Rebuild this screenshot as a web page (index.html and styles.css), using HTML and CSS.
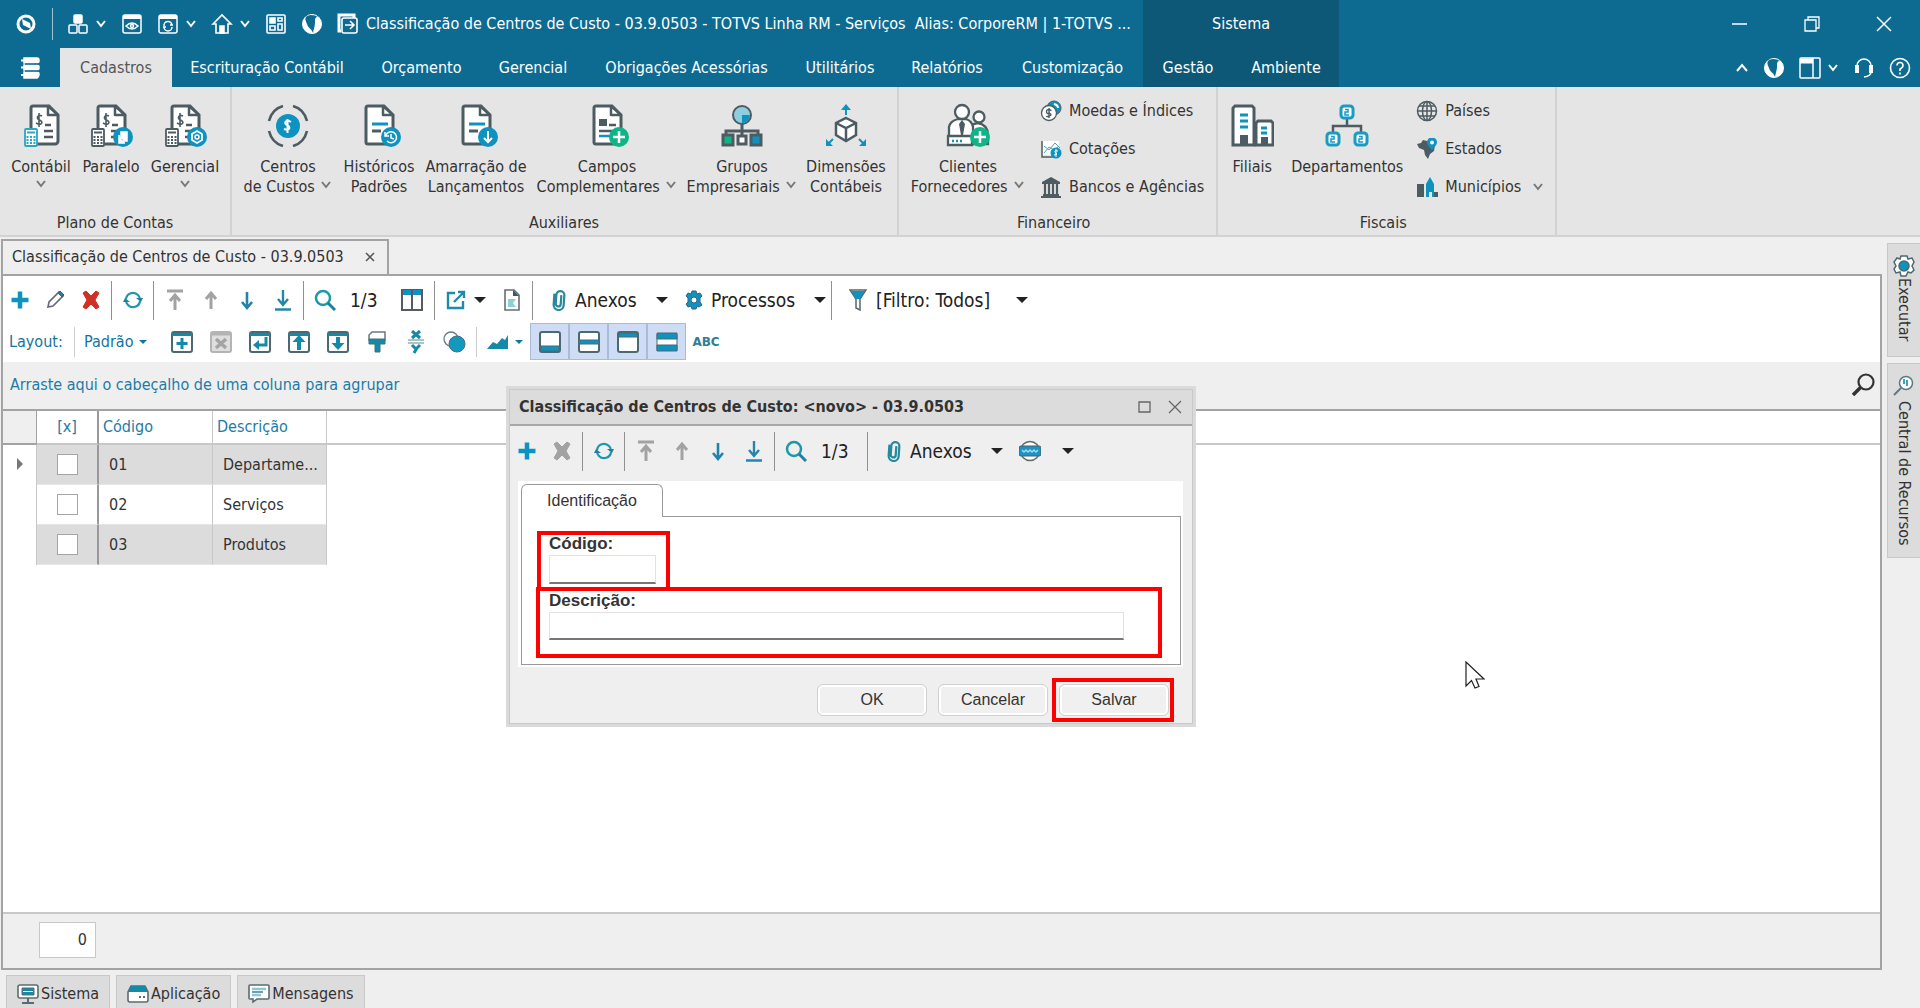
FILE: index.html
```html
<!DOCTYPE html>
<html lang="pt-BR">
<head>
<meta charset="utf-8">
<title>Classificação de Centros de Custo - TOTVS Linha RM</title>
<link rel="stylesheet" href="styles.css">
</head>
<body>
<svg class="defs" aria-hidden="true">
  <symbol id="chev" viewBox="0 0 12 10"><path d="M2 2l4 5 4-5" fill="none" stroke="currentColor" stroke-width="2"/></symbol>
  <symbol id="caret" viewBox="0 0 12 8"><path d="M0 1h12L6 7z" fill="currentColor"/></symbol>
  <symbol id="globe" viewBox="0 0 22 22"><circle cx="11" cy="11" r="9.500" fill="#fff" stroke="#fff"/><path d="M6 3c4-2 8-1 11 1-3 0-3 2-3 5 0 4-1 6-2 11-2-5-5-5-6-9C5 8 3 6 6 3z" fill="#0d6b92"/></symbol>
  <symbol id="doc" viewBox="0 0 44 44"><path d="M11 3h16l9 9v26a3 3 0 0 1-3 3H11a2 2 0 0 1-2-2V5a2 2 0 0 1 2-2z" fill="#fff" stroke="#4c5c62" stroke-width="3"/><path d="M26 3v9h10z" fill="#fff" stroke="#4c5c62" stroke-width="2.500" stroke-linejoin="round"/></symbol>
  <symbol id="money" viewBox="0 0 44 44"><use href="#doc"/><path d="M20 13c-4-2-6 2-3 4 4 1 4 5-1 4l-2-1M17 10v14" fill="none" stroke="#4c5c62" stroke-width="1.600"/><path d="M23 22h6M22 28h9M22 34h9" stroke="#4c5c62" stroke-width="2.500"/></symbol>
  <symbol id="calc" viewBox="0 0 14 19"><rect x="1" y="1" width="12" height="17" rx="1" fill="#fff" stroke="currentColor" stroke-width="1.800"/><path d="M3 4.500h8" stroke="currentColor" stroke-width="2"/><path d="M3.500 8v9M7 8v9M10.500 8v9" stroke="currentColor" stroke-width="2" stroke-dasharray="2 1"/></symbol>
  <symbol id="plus" viewBox="0 0 20 20"><path d="M10 1.500v17M1.500 10h17" stroke="#0e93c1" stroke-width="4.500"/></symbol>
  <symbol id="cross" viewBox="0 0 20 20"><path d="M2 3l3-2 5 5 5-5 3 2-4 7 4 7-3 2-5-5-5 5-3-2 4-7z" fill="currentColor" stroke="currentColor" stroke-linejoin="round"/></symbol>
  <symbol id="refresh" viewBox="0 0 22 20"><path d="M4 9a7 7 0 0 1 12-4l2 3M18 11a7 7 0 0 1-12 4l-2-3" fill="none" stroke="#1f97ab" stroke-width="2.200"/><path d="M14 8h7l-2 4zM8 12H1l2-4z" fill="#1f7fa6"/></symbol>
  <symbol id="first" viewBox="0 0 20 22"><path d="M2 2h16M10 21V7M5 12l5-6 5 6" fill="none" stroke="#a2a2a2" stroke-width="3"/></symbol>
  <symbol id="up" viewBox="0 0 20 22"><path d="M10 20V4M5 10l5-6 5 6" fill="none" stroke="#a2a2a2" stroke-width="3"/></symbol>
  <symbol id="down" viewBox="0 0 20 22"><path d="M10 3v15M5 13l5 6 5-6" fill="none" stroke="#2480ad" stroke-width="2.600"/></symbol>
  <symbol id="last" viewBox="0 0 20 22"><path d="M10 1v14M5 10l5 6 5-6M2 20.500h16" fill="none" stroke="#2486a8" stroke-width="2.400"/></symbol>
  <symbol id="search" viewBox="0 0 22 22"><circle cx="9" cy="9" r="7" fill="none" stroke="#1f97ab" stroke-width="2.500"/><path d="M14 14l7 7" stroke="#1f7fa6" stroke-width="3"/></symbol>
  <symbol id="clip" viewBox="0 0 16 22"><path d="M10 6v9a2.500 2.500 0 0 1-5 0V6a4 4 0 0 1 8 0v10a5 5 0 0 1-10 0V5" transform="rotate(4 8 11)" fill="none" stroke="#27899b" stroke-width="2.200"/></symbol>
  <symbol id="win" viewBox="0 0 22 22"><rect x="1" y="1" width="20" height="20" rx="2" fill="#fff" stroke="#4c6870" stroke-width="2"/><path d="M1 2h20v3H1z" fill="#1489a8"/></symbol>
</svg>

<div class="app">
  <header class="top">
    <div class="titlebar">
      <div class="quick">
        <button class="q q-logo" aria-label="Aplicação"><svg width="22" height="22"><circle cx="11" cy="11" r="8" fill="none" stroke="#fff" stroke-width="3"/><path d="M7 6l8 4 1 6-8-4z" fill="#fff"/></svg></button>
        <button class="q q-wide" aria-label="Módulos"><svg width="22" height="22" fill="none" stroke="#fff" stroke-width="1.500"><rect x="7" y="2" width="8" height="8" rx="1" fill="#fff"/><rect x="2" y="12" width="8" height="8" rx="1"/><rect x="12" y="12" width="8" height="8" rx="1"/></svg><svg class="chev"><use href="#chev"/></svg></button>
        <button class="q q-mid" aria-label="Visualizar"><svg width="22" height="22" fill="none" stroke="#fff" stroke-width="1.500"><rect x="2" y="2" width="18" height="18" rx="2"/><path d="M2 4h18" stroke-width="4"/><path d="M5 13q6-6 12 0q-6 6-12 0z"/><circle cx="11" cy="13" r="1.500"/></svg></button>
        <button class="q q-wide" aria-label="Atualizar janela"><svg width="22" height="22" fill="none" stroke="#fff" stroke-width="1.500"><rect x="2" y="2" width="18" height="18" rx="2"/><path d="M2 4h18" stroke-width="4"/><path d="M7 13a4 4 0 0 1 8-1M15 14a4 4 0 0 1-8 0M13 12h3M6 14h3"/></svg><svg class="chev"><use href="#chev"/></svg></button>
        <button class="q q-wide" aria-label="Início"><svg width="22" height="22" fill="none" stroke="#fff" stroke-width="1.600"><path d="M2 11l9-9 9 9h-3v9H5v-9z"/><path d="M9 13h4v7H9z" fill="#fff"/></svg><svg class="chev"><use href="#chev"/></svg></button>
        <button class="q q-mid" aria-label="Painel"><svg width="22" height="22" fill="none" stroke="#fff" stroke-width="1.600"><rect x="2" y="2" width="18" height="18" rx="1"/><path d="M5 5h5v5H5z" fill="#fff"/><path d="M13 5h4v3h-4zM13 11h4v6h-4zM5 13h5v4H5z"/></svg></button>
        <button class="q q-mid" aria-label="Portal"><svg width="22" height="22"><use href="#globe"/></svg></button>
        <button class="q q-mid" aria-label="Sair"><svg width="22" height="22" fill="none" stroke="#fff" stroke-width="1.600"><path d="M4 18H2V2h15v3" stroke-width="3"/><rect x="5" y="5" width="15" height="15" rx="2"/><path d="M8 12h8M13 8l4 4-4 4"/></svg></button>
        <span class="caption">Classificação de Centros de Custo - 03.9.0503 - TOTVS Linha RM - Serviços&nbsp; Alias: CorporeRM | 1-TOTVS ...</span>
      </div>
      <div class="context">Sistema</div>
      <div class="winbtns">
        <button aria-label="Minimizar"><svg width="16" height="16"><path d="M0 8h15" stroke="#fff" stroke-width="1.500"/></svg></button>
        <button aria-label="Restaurar"><svg width="16" height="16" fill="none" stroke="#fff" stroke-width="1.300"><path d="M1 4h11v11H1zM4 4V1h11v11h-3"/></svg></button>
        <button aria-label="Fechar"><svg width="16" height="16"><path d="M1 1l14 14M15 1L1 15" stroke="#fff" stroke-width="1.500"/></svg></button>
      </div>
    </div>
    <nav class="tabs">
      <button class="dbicon" aria-label="Menu"><svg width="20" height="22" fill="none" stroke="#fff" stroke-width="1.500"><path d="M4 1h13q2 0 2 2.500T17 6H4zM4 8h13q2 0 2 2.500T17 13H4zM4 15h13q2 0 2 2.500T17 21H4z" fill="#fff"/><path d="M1 3.500h6M1 10.500h6M1 18h6" stroke-width="2"/><path d="M5 7h14M5 14h14" stroke="#0d6b92"/></svg></button>
      <a href="#" class="active">Cadastros</a><a href="#">Escrituração Contábil</a><a href="#">Orçamento</a><a href="#">Gerencial</a><a href="#">Obrigações Acessórias</a><a href="#">Utilitários</a><a href="#">Relatórios</a><a href="#">Customização</a><a href="#" class="ctx">Gestão</a><a href="#" class="ctx">Ambiente</a>
      <div class="tools">
        <button aria-label="Recolher"><svg width="14" height="10"><path d="M2 8l5-6 5 6" fill="none" stroke="#fff" stroke-width="2"/></svg></button>
        <button aria-label="Portal"><svg width="22" height="22"><use href="#globe"/></svg></button>
        <button aria-label="Layout da janela"><svg width="22" height="22" fill="none" stroke="#fff" stroke-width="1.500"><rect x="1" y="1" width="20" height="20" rx="1"/><path d="M1 4h13" stroke-width="5"/><path d="M14 1v20"/></svg><svg class="chev"><use href="#chev"/></svg></button>
        <button aria-label="Suporte"><svg width="22" height="22" fill="none" stroke="#fff"><path d="M4 12V9a7 7 0 0 1 14 0v3M18 15q0 4-7 5" stroke-width="1.500"/><path d="M4 8v8M18 8v8" stroke-width="4"/></svg></button>
        <button aria-label="Ajuda"><svg width="22" height="22" fill="none" stroke="#fff" stroke-width="1.600"><circle cx="11" cy="11" r="9.500"/><path d="M8 8.500q0-3 3-3t3 3q0 2-3 3.500v2M11 15.500v2"/></svg></button>
      </div>
    </nav>
  </header>

  <section class="ribbon">
    <div class="group">
      <div class="items">
        <button class="big w72"><svg class="ico" viewBox="0 0 44 44"><use href="#money" x="3"/><g color="#2aa5c6"><use href="#calc" x="5" y="25" width="14" height="19"/></g></svg><span>Contábil</span><svg class="chev"><use href="#chev"/></svg></button>
        <button class="big w68"><svg class="ico" viewBox="0 0 44 44"><use href="#money"/><g color="#4c5c62"><use href="#calc" x="2" y="25" width="14" height="19"/></g><circle cx="34" cy="34" r="10" fill="#0e93c1"/><path d="M30 32v8h6M32 29h6v9h-6z" fill="#fff" stroke="#fff" stroke-width="1.500"/></svg><span>Paralelo</span></button>
        <button class="big w80"><svg class="ico" viewBox="0 0 44 44"><use href="#money"/><g color="#4c5c62"><use href="#calc" x="2" y="25" width="14" height="19"/></g><circle cx="34" cy="34" r="10" fill="#0e93c1"/><path d="M34 28l5 3v6l-5 3-5-3v-6z" fill="none" stroke="#fff" stroke-width="1.800"/><circle cx="34" cy="34" r="2" fill="none" stroke="#fff" stroke-width="1.500"/></svg><span>Gerencial</span><svg class="chev"><use href="#chev"/></svg></button>
      </div>
      <h2>Plano de Contas</h2>
    </div>
    <div class="group g2">
      <div class="items">
        <button class="big w100"><svg class="ico" viewBox="0 0 44 44"><circle cx="22" cy="23" r="12" fill="#0e93c1"/><path d="M25 19c-5-3-8 1-4 3s3 6-3 4M21.500 16v14" fill="none" stroke="#fff" stroke-width="2"/><path d="M17 3Q6 6 3 18M27 3q11 3 14 15M17 43Q6 40 3 28M27 43q11-3 14-15" fill="none" stroke="#4c5c62" stroke-width="2.600"/></svg><span>Centros<br>de Custos <svg class="chev"><use href="#chev"/></svg></span></button>
        <button class="big w82"><svg class="ico" viewBox="0 0 44 44"><use href="#doc"/><path d="M15 21h16" stroke="#0e93c1" stroke-width="3"/><path d="M15 28h9" stroke="#4c5c62" stroke-width="3"/><circle cx="34" cy="34" r="10" fill="#0e93c1"/><path d="M29 32a5.500 5.500 0 1 1 1 6M28 29v4h4M34 31v4l3 1" fill="none" stroke="#fff" stroke-width="1.500"/></svg><span>Históricos<br>Padrões</span></button>
        <button class="big w112"><svg class="ico" viewBox="0 0 44 44"><use href="#doc"/><path d="M15 21h16" stroke="#0e93c1" stroke-width="3"/><path d="M15 28h9" stroke="#4c5c62" stroke-width="3"/><circle cx="34" cy="34" r="10" fill="#0e93c1"/><path d="M34 28v11M30 35l4 4 4-4" fill="none" stroke="#fff" stroke-width="2"/></svg><span>Amarração de<br>Lançamentos</span></button>
        <button class="big w150"><svg class="ico" viewBox="0 0 44 44"><use href="#doc"/><path d="M14 16h8v7h-8z" fill="#4c5c62"/><path d="M24 22h7M14 28h16" stroke="#4c5c62" stroke-width="2.500"/><path d="M14 33h12" stroke="#0e93c1" stroke-width="2.500"/><circle cx="34" cy="34" r="10" fill="#0fb587"/><path d="M34 28v12M28 34h12" stroke="#fff" stroke-width="2.500"/></svg><span>Campos<br>Complementares <svg class="chev"><use href="#chev"/></svg></span></button>
        <button class="big w120"><svg class="ico" viewBox="0 0 44 44"><circle cx="22" cy="12" r="9" fill="#8fcde0" stroke="#4c5c62" stroke-width="2"/><path d="M22 12h8a8 8 0 0 1-8 8z" fill="#0e93c1"/><path d="M22 21v12M6 33v-5h32v5" fill="none" stroke="#4c5c62" stroke-width="3"/><g stroke="#4c5c62" stroke-width="3"><path d="M3 32h10v10H3z" fill="#0fb587"/><path d="M18 33h8v8h-8z" fill="#fff"/><path d="M31 32h10v10H31z" fill="#0e93c1"/></g></svg><span>Grupos<br>Empresariais <svg class="chev"><use href="#chev"/></svg></span></button>
        <button class="big w88"><svg class="ico" viewBox="0 0 44 44"><path d="M22 15l10 5v12l-10 6-10-6V20z" fill="#fff" stroke="#4c5c62" stroke-width="2.500"/><path d="M12 20l10 5 10-5M22 25v12" fill="none" stroke="#4c5c62" stroke-width="2.500"/><path d="M22 12V5M9 36l-5 5M35 36l5 5" stroke="#0e93c1" stroke-width="2"/><path d="M17 7h10l-5-6zM2 36v7h7zM42 36v7h-7z" fill="#0e93c1"/></svg><span>Dimensões<br>Contábeis</span></button>
      </div>
      <h2>Auxiliares</h2>
    </div>
    <div class="group g3">
      <div class="items">
        <button class="big w130"><svg class="ico" viewBox="0 0 44 44"><g fill="#fff" stroke="#4c5c62" stroke-width="2.300"><path d="M22 41V27q2-6 10-7 10 2 10 12v9z"/><circle cx="33" cy="14" r="5.500"/><path d="M3 35V24q1-6 9-8h8q6 2 7 8v11z"/><circle cx="16" cy="9" r="7"/><path d="M2 33h24v9H2z"/></g><path d="M16 17l3 4-2 11h-2l-2-11z" fill="#4c5c62"/><path d="M6 38h12" stroke="#0e93c1" stroke-width="2.500" stroke-dasharray="2 2"/><circle cx="34" cy="34" r="10" fill="#0fb587"/><path d="M34 28v12M28 34h12" stroke="#fff" stroke-width="2.500"/></svg><span>Clientes<br>Fornecedores <svg class="chev"><use href="#chev"/></svg></span></button>
        <div class="smalls">
          <button class="small"><svg width="22" height="22" viewBox="0 0 22 22"><circle cx="14" cy="8" r="7" fill="#0e93c1" stroke="#4c5c62"/><path d="M14 4q4 1 4 4" stroke="#fff" fill="none" stroke-width="2"/><circle cx="9" cy="13" r="7.500" fill="#fff" stroke="#4c5c62" stroke-width="1.300"/><path d="M11.500 10.500q-5-2-5 1t3 1.500q3 2 0 3t-3 0M9 8v10" fill="none" stroke="#4c5c62" stroke-width="1.400"/></svg>Moedas e Índices</button>
          <button class="small"><svg width="22" height="22" viewBox="0 0 22 22"><path d="M2 3h17v14H2z" fill="#fff"/><path d="M2 3v16h12" fill="none" stroke="#4c5c62" stroke-width="1.500"/><path d="M4 8l5 4 6-7 5 5M4 15l5-6 5 3 5-4" fill="none" stroke="#4da5bf"/><circle cx="16" cy="15" r="5.500" fill="#0e93c1"/><path d="M18 13q-4-1-3 1t2 2-3 1M16 11v8" fill="none" stroke="#fff"/></svg>Cotações</button>
          <button class="small"><svg width="22" height="22" viewBox="0 0 22 22" fill="#4c5c62"><path d="M11 1l9 5v2H2V6z"/><path d="M3 18h16v2H3zM1 20h20v2H1z"/><path d="M5 8v10M9 8v10M13 8v10M17 8v10" stroke="#4c5c62" stroke-width="2.200"/></svg>Bancos e Agências</button>
        </div>
      </div>
      <h2>Financeiro</h2>
    </div>
    <div class="group g4">
      <div class="items">
        <button class="big w60"><svg class="ico" viewBox="0 0 44 44"><path d="M3 42V5l2-2h17l2 2v37z" fill="#fff" stroke="#4c5c62" stroke-width="3"/><path d="M26 42V20l2-2h13l2 2v22z" fill="#fff" stroke="#4c5c62" stroke-width="3"/><path d="M10 12h8M10 18h8M10 24h8M31 25h6M31 30h6" stroke="#0e93c1" stroke-width="3"/><path d="M10 42V32h8v10zM31 42v-8h7v8z" fill="#4c5c62"/></svg><span>Filiais</span></button>
        <button class="big w130"><svg class="ico" viewBox="0 0 44 44"><path d="M22 14v8M8 30v-7h28v7" fill="none" stroke="#4c5c62" stroke-width="2.500"/><g fill="#fff" stroke="#1a9bc2" stroke-width="3"><rect x="16" y="3" width="12" height="12" rx="3"/><rect x="2" y="30" width="12" height="12" rx="3"/><rect x="30" y="30" width="12" height="12" rx="3"/></g><g fill="none" stroke="#1a9bc2" stroke-width="1.500"><path d="M20 6.500h3v2.500h-3v3h4M6 33.500h3v2.500H6v3h4M34 33.500h3v2.500h-3v3h4"/></g></svg><span>Departamentos</span></button>
        <div class="smalls s4">
          <button class="small"><svg width="22" height="22" viewBox="0 0 22 22" fill="none" stroke="#4c5c62" stroke-width="1.500"><circle cx="11" cy="11" r="9.500"/><ellipse cx="11" cy="11" rx="4.500" ry="9.500"/><path d="M11 1v20M1 11h20M3 6h16M3 16h16"/></svg>Países</button>
          <button class="small"><svg width="22" height="22" viewBox="0 0 22 22"><path d="M1 6l4-1 2-3 4 1 8 4-1 6-4 3-2 5-3-4-1-5-5-2z" fill="#4c5c62"/><path d="M16 12q-5-5-5-8a5 4.500 0 0 1 10 0q0 3-5 8z" fill="#0e93c1"/><circle cx="16" cy="4.500" r="2" fill="#fff"/></svg>Estados</button>
          <button class="small"><svg width="22" height="22" viewBox="0 0 22 22"><path d="M1 8h7v13H1zM17 16h5v5h-5z" fill="#4c5c62"/><path d="M10 21V8l4-7 4 7v13h-2v-5h-3v5z" fill="#0e93c1"/></svg>Municípios<svg class="chev push"><use href="#chev"/></svg></button>
        </div>
      </div>
      <h2>Fiscais</h2>
    </div>
  </section>

  <div class="body">
    <div class="left">
      <div class="doctab"><span>Classificação de Centros de Custo - 03.9.0503</span><button aria-label="Fechar aba"><svg width="12" height="12"><path d="M2 2l8 8M10 2l-8 8" stroke="#555" stroke-width="1.500"/></svg></button></div>
      <main class="panel">
        <div class="tb tb1">
          <button class="b" aria-label="Novo"><svg width="20" height="20"><use href="#plus"/></svg></button>
          <button class="b" aria-label="Editar"><svg width="20" height="20"><path d="M3 17l1-5L14 2l4 4L8 16z" fill="#fff" stroke="#667" stroke-width="1.600"/><path d="M13 3l2-2 4 4-2 2z" fill="#1f7fa6" stroke="#556"/></svg></button>
          <button class="b red" aria-label="Excluir"><svg width="20" height="20"><use href="#cross"/></svg></button>
          <i class="sep"></i>
          <button class="b" aria-label="Atualizar"><svg width="22" height="20"><use href="#refresh"/></svg></button>
          <i class="sep"></i>
          <button class="b" aria-label="Primeiro"><svg width="20" height="22"><use href="#first"/></svg></button>
          <button class="b" aria-label="Anterior"><svg width="20" height="22"><use href="#up"/></svg></button>
          <button class="b" aria-label="Próximo"><svg width="20" height="22"><use href="#down"/></svg></button>
          <button class="b" aria-label="Último"><svg width="20" height="22"><use href="#last"/></svg></button>
          <i class="sep"></i>
          <button class="b" aria-label="Pesquisar"><svg width="22" height="22"><use href="#search"/></svg></button>
          <span class="count">1/3</span>
          <button class="b cols" aria-label="Colunas"><svg width="22" height="22"><path d="M1 1h20v20H1zM11 1v20" fill="#fff" stroke="#555b60" stroke-width="2"/><path d="M2 1h8v5H2zM12 1h8v5h-8z" fill="#0e93c1"/></svg></button>
          <i class="sep"></i>
          <button class="b ext" aria-label="Exportar"><svg width="20" height="20" fill="none" stroke="#1f8ba6" stroke-width="2.400"><path d="M9 3H2v15h15v-7M8 12l9-9M12 2h6v6"/></svg><svg class="caret"><use href="#caret"/></svg></button>
          <button class="b" aria-label="Relatório"><svg width="16" height="22"><path d="M1 1h9l5 5v15H1z" fill="#fff" stroke="#666e73" stroke-width="1.600"/><path d="M9 1v6h6z" fill="#345b72"/><path d="M4 10h8l-3 4 3 4H4z" fill="#8fd0d4"/></svg></button>
          <i class="sep"></i>
          <button class="b txt anexos"><svg width="16" height="22"><use href="#clip"/></svg>Anexos<svg class="caret"><use href="#caret"/></svg></button>
          <button class="b txt procs"><svg width="20" height="20"><g stroke="#37647a" stroke-width="1"><path d="M8 1h4l1 3 3-1 2 3-2 2v4l2 3-3 2-2-1-1 3H8l-1-3-3 1-2-3 2-2V8L2 6l2-3 3 1z" fill="#0e93c1"/><circle cx="10" cy="10" r="3" fill="#fff"/></g></svg>Processos<svg class="caret"><use href="#caret"/></svg></button>
          <i class="sep"></i>
          <button class="b txt filter"><svg width="18" height="22"><path d="M1 1h16l-6 9v11l-4-2v-9z" fill="#fff" stroke="#58666c" stroke-width="1.500"/><path d="M2 2h14l-5 8H7z" fill="#0e93c1"/></svg>[Filtro: Todos]<svg class="caret"><use href="#caret"/></svg></button>
        </div>
        <div class="tb tb2">
          <span class="lay">Layout:</span><i class="sep light"></i>
          <button class="padrao">Padrão<svg class="caret sm"><use href="#caret"/></svg></button>
          <button class="l" aria-label="Novo layout"><svg width="22" height="22"><use href="#win"/><path d="M11 7v11M5.500 12.500h11" stroke="#1489a8" stroke-width="3"/></svg></button>
          <button class="l" aria-label="Excluir layout"><svg width="22" height="22"><rect x="1" y="1" width="20" height="20" rx="2" fill="#dedede" stroke="#b4b4b4" stroke-width="2"/><path d="M1 3h20" stroke="#b4b4b4" stroke-width="3"/><path d="M6 8l10 9M16 8L6 17" stroke="#a4a4a4" stroke-width="3.500"/></svg></button>
          <button class="l" aria-label="Restaurar layout"><svg width="22" height="22"><use href="#win"/><path d="M17 6v8H9" fill="none" stroke="#1489a8" stroke-width="3"/><path d="M4 14l6-5v10z" fill="#1489a8"/></svg></button>
          <button class="l" aria-label="Exportar layout"><svg width="22" height="22"><use href="#win"/><path d="M11 19v-9" stroke="#1489a8" stroke-width="4"/><path d="M4.500 11L11 4l6.500 7z" fill="#1489a8"/></svg></button>
          <button class="l" aria-label="Importar layout"><svg width="22" height="22"><use href="#win"/><path d="M11 6v8" stroke="#1489a8" stroke-width="4"/><path d="M4.500 12L11 19l6.500-7z" fill="#1489a8"/></svg></button>
          <button class="l" aria-label="Filtro visual"><svg width="20" height="24"><path d="M5 2h13v8H2V5z" fill="#fff" stroke="#6a7a80" stroke-width="1.500"/><path d="M2 9h16v5h-5v8H8v-8H2z" fill="#1489a8" stroke="#47707c"/></svg></button>
          <button class="l" aria-label="Formato"><svg width="18" height="24" fill="none" stroke="#1489a8" stroke-width="3"><path d="M5 1l8 7M13 1L5 8M5 15l4 4 4-4M10 18l-3 5"/><path d="M1 10h16M1 13h16" stroke="#5c8a96" stroke-width="1.200"/></svg></button>
          <button class="l" aria-label="Formas"><svg width="24" height="22"><circle cx="8" cy="8" r="7" fill="#fff" stroke="#6a7a80" stroke-width="1.300"/><circle cx="14" cy="13" r="8" fill="#1399bd" stroke="#47707c"/></svg></button>
          <i class="sep light"></i>
          <button class="l chart" aria-label="Gráfico"><svg width="22" height="18"><path d="M0 16l6-7 4 2 5-6 3 2 3-5v14z" fill="#1489a8"/></svg><svg class="caret sm"><use href="#caret"/></svg></button>
          <button class="t" aria-label="Rodapé" aria-pressed="true"><svg width="22" height="22"><rect x="1" y="1" width="20" height="20" rx="2" fill="#fff" stroke="#4c6870" stroke-width="2"/><path d="M2 15h18v5H2z" fill="#0e93c1" stroke="#4c6870"/></svg></button>
          <button class="t" aria-label="Linhas" aria-pressed="true"><svg width="22" height="22"><rect x="1" y="1" width="20" height="20" rx="2" fill="#fff" stroke="#4c6870" stroke-width="2"/><path d="M1 9h20v4H1z" fill="#0e93c1" stroke="#4c6870"/></svg></button>
          <button class="t" aria-label="Cabeçalho" aria-pressed="true"><svg width="22" height="22"><rect x="1" y="1" width="20" height="20" rx="2" fill="#fff" stroke="#4c6870" stroke-width="2"/><path d="M2 2h18v4H2z" fill="#0e93c1" stroke="#4c6870"/></svg></button>
          <button class="t" aria-label="Faixas" aria-pressed="true"><svg width="22" height="22"><rect x="1" y="4" width="20" height="15" fill="#fff" stroke="#4c6870"/><path d="M1 2h20v6H1zM1 14h20v6H1z" fill="#0e93c1" stroke="#4c6870"/></svg></button>
          <button class="abc">ABC</button>
        </div>
        <div class="groupby"><span>Arraste aqui o cabeçalho de uma coluna para agrupar</span><button aria-label="Localizar"><svg width="24" height="24"><circle cx="14" cy="9" r="7.500" fill="none" stroke="#333" stroke-width="2.200"/><path d="M9 14l-8 8" stroke="#333" stroke-width="3.500"/></svg></button></div>
        <div class="gridwrap">
          <table>
            <colgroup><col class="c0"><col class="c1"><col class="c2"><col class="c2"><col></colgroup>
            <thead><tr><th class="ind"></th><th class="chk">[x]</th><th>Código</th><th>Descrição</th><th class="fill"></th></tr></thead>
            <tbody>
              <tr><td class="ind"><svg width="8" height="12"><path d="M1 0l6 6-6 6z" fill="#777"/></svg></td><td class="chk"><input type="checkbox" aria-label="Selecionar 01"></td><td>01</td><td>Departame...</td><td class="fill"></td></tr>
              <tr><td class="ind"></td><td class="chk"><input type="checkbox" aria-label="Selecionar 02"></td><td>02</td><td>Serviços</td><td class="fill"></td></tr>
              <tr><td class="ind"></td><td class="chk"><input type="checkbox" aria-label="Selecionar 03"></td><td>03</td><td>Produtos</td><td class="fill"></td></tr>
            </tbody>
          </table>
        </div>
        <div class="foot"><output>0</output></div>
      </main>
      <div class="bottom">
        <button><svg width="22" height="20"><rect x="1" y="1" width="20" height="13" rx="2" fill="#fff" stroke="#5a6c72" stroke-width="1.600"/><path d="M5 4h12v7H5z" fill="#1489a8" stroke="#5a6c72"/><path d="M6 7.500h10" stroke="#fff"/><path d="M11 14v4M5 19h12" stroke="#5a6c72" stroke-width="2"/></svg>Sistema</button>
        <button><svg width="22" height="20"><path d="M4 2h14l3 6v8q0 2-2 2H3q-2 0-2-2V8z" fill="#fff" stroke="#5a6c72" stroke-width="1.600"/><path d="M4 2h14l3 6H1z" fill="#1489a8"/><path d="M12 13h2M16 13h2" stroke="#5a6c72" stroke-width="2"/></svg>Aplicação</button>
        <button><svg width="22" height="20"><path d="M2 1h18q1 0 1 1v12q0 1-1 1H9l-4 3v-3H2q-1 0-1-1V2q0-1 1-1z" fill="#fff" stroke="#5a6c72" stroke-width="1.600"/><path d="M4 5h14M4 11h9" stroke="#8ac7d8" stroke-width="2.500"/><path d="M4 8h11" stroke="#7a9aa4" stroke-width="2"/></svg>Mensagens</button>
      </div>
    </div>
    <aside class="side">
      <button><svg width="24" height="24"><path d="M9 2h6l1 3 4-1 2 4-2 4 2 4-3 3-3-1-2 4H9l-1-4-4 1-2-4 2-3-2-4 3-4 3 1z" fill="#fff" stroke="#4c6870" stroke-width="1.500"/><circle cx="12" cy="12" r="5" fill="#0e93c1" stroke="#4c6870" stroke-width="1.500"/></svg><span>Executar</span></button>
      <button><svg width="22" height="22"><circle cx="13" cy="8" r="6.500" fill="#fff" stroke="#5a7a84" stroke-width="1.500"/><path d="M8 13l-7 7" stroke="#5a7a84" stroke-width="2"/><path d="M11 4v5M14 5v6" stroke="#3fa3c0" stroke-width="2"/></svg><span>Central de Recursos</span></button>
    </aside>
  </div>

  <section class="dialog" role="dialog" aria-labelledby="dlgt">
    <div class="dtitle"><h1 id="dlgt">Classificação de Centros de Custo: &lt;novo&gt; - 03.9.0503</h1>
      <button aria-label="Maximizar"><svg width="14" height="14"><path d="M1 2h11v10H1z" fill="none" stroke="#666" stroke-width="1.300"/></svg></button>
      <button aria-label="Fechar"><svg width="14" height="14"><path d="M1 1l12 12M13 1L1 13" stroke="#666" stroke-width="1.300"/></svg></button>
    </div>
    <div class="tb dtb">
      <button class="b" aria-label="Novo"><svg width="20" height="20"><use href="#plus"/></svg></button>
      <button class="b grey" aria-label="Excluir"><svg width="20" height="20"><use href="#cross"/></svg></button>
      <i class="sep"></i>
      <button class="b" aria-label="Atualizar"><svg width="22" height="20"><use href="#refresh"/></svg></button>
      <i class="sep"></i>
      <button class="b" aria-label="Primeiro"><svg width="20" height="22"><use href="#first"/></svg></button>
      <button class="b" aria-label="Anterior"><svg width="20" height="22"><use href="#up"/></svg></button>
      <button class="b" aria-label="Próximo"><svg width="20" height="22"><use href="#down"/></svg></button>
      <button class="b" aria-label="Último"><svg width="20" height="22"><use href="#last"/></svg></button>
      <i class="sep"></i>
      <button class="b" aria-label="Pesquisar"><svg width="22" height="22"><use href="#search"/></svg></button>
      <span class="count">1/3</span>
      <i class="sep"></i>
      <button class="b txt anexos"><svg width="16" height="22"><use href="#clip"/></svg>Anexos<svg class="caret"><use href="#caret"/></svg></button>
      <button class="b www" aria-label="Web"><svg width="22" height="22"><circle cx="11" cy="11" r="9.500" fill="#fff" stroke="#666" stroke-width="1.500"/><rect x="0" y="6" width="22" height="10" rx="2" fill="#1c93c4" stroke="#47606c"/><path d="M3 10l2 2 2-2 2 2 2-2 2 2 2-2 2 2 2-2" fill="none" stroke="#9fd8ec" stroke-width="1.500"/></svg><svg class="caret"><use href="#caret"/></svg></button>
    </div>
    <div class="dbody">
      <button class="dtab">Identificação</button>
      <div class="form">
        <label for="cod">Código:</label><input id="cod" class="short" type="text">
        <label for="des">Descrição:</label><input id="des" class="long" type="text">
      </div>
    </div>
    <div class="dbtns"><button>OK</button><button>Cancelar</button><button>Salvar</button></div>
    <div class="mark m1"></div><div class="mark m2"></div><div class="mark m3"></div>
  </section>
  <svg class="cursor" width="20" height="30"><path d="M1 1v24l5.500-5.500L10 27l4-1.500-3-7.500h8z" fill="#fff" stroke="#222" stroke-width="1.200"/></svg>
</div>
</body>
</html>
```
FILE: styles.css
```css
* { box-sizing: border-box; }
body { margin: 0; background: #efefef; color: #333; font: 16px/20px "DejaVu Sans Condensed", "DejaVu Sans", sans-serif; }
button { background: none; border: 0; padding: 0; margin: 0; font: inherit; color: inherit; }
h1, h2 { margin: 0; font: inherit; }
svg { flex: none; }
.defs { position: absolute; width: 0; height: 0; }
.chev { width: 12px; height: 10px; }
.caret { width: 12px; height: 8px; color: #222; }
.caret.sm { width: 8px; height: 6px; color: #12759c; }
.app { min-height: 100vh; display: flex; flex-direction: column; position: relative; }

/* title bar and main tabs */
.top { background: #0d6b92; color: #fff; }
.titlebar { height: 48px; display: flex; }
.quick { width: 1143px; display: flex; align-items: center; padding-left: 8px; }
.q { display: flex; align-items: center; justify-content: center; gap: 6px; height: 32px; }
.q-logo { width: 45px; border-right: 1px solid #9fc3d3; padding-right: 8px; }
.q-wide { width: 54px; }
.q-mid { width: 36px; }
.q-logo + .q-wide { margin-left: 7px; }
.caption { white-space: nowrap; }
.context { width: 196px; background: #0e5877; display: flex; align-items: center; justify-content: center; }
.winbtns { margin-left: auto; display: flex; }
.winbtns button { width: 72px; display: flex; align-items: center; justify-content: center; }
.tabs { height: 39px; display: grid; grid-template-columns: 60px 112px 190px 119px 104px 203px 104px 110px 141px 90px 106px 1fr; }
.tabs a, .dbicon { color: #fff; text-decoration: none; display: flex; align-items: center; justify-content: center; white-space: nowrap; }
.tabs .active { background: #e5e5e5; color: #555; }
.tabs .ctx { background: #0e5877; }
.tools { display: flex; justify-content: flex-end; align-items: center; gap: 14px; padding-right: 9px; }
.tools button { display: flex; align-items: center; gap: 6px; }

/* ribbon */
.ribbon { height: 150px; display: flex; background: #e5e5e5; border-bottom: 2px solid #d2d2d2; }
.group { display: flex; flex-direction: column; border-right: 2px solid #d2d2d2; padding: 0 5px; }
.g2 { padding: 0 7px 0 6px; }
.g3 { padding: 0 12px 0 4px; }
.g4 { padding: 0 11px 0 4px; }
.group h2 { text-align: center; height: 22px; }
.items { display: flex; flex: 1; }
.big { display: flex; flex-direction: column; align-items: center; padding-top: 16px; white-space: nowrap; }
.ico { width: 44px; height: 44px; margin-bottom: 10px; }
.big .chev { color: #777; margin-top: 2px; }
.big span .chev { margin: 0 0 2px 1px; }
.w60 { width: 60px; } .w68 { width: 68px; } .w72 { width: 72px; } .w80 { width: 80px; } .w82 { width: 82px; } .w88 { width: 88px; }
.w100 { width: 100px; } .w112 { width: 112px; } .w120 { width: 120px; } .w130 { width: 130px; } .w150 { width: 150px; }
.smalls { display: flex; flex-direction: column; padding: 5px 0 0 7px; }
.s4 { padding-left: 4px; }
.small { height: 38px; display: flex; align-items: center; gap: 7px; white-space: nowrap; }
.small .push { color: #777; margin-left: 4px; }

/* document area */
.body { flex: 1; display: flex; padding-top: 2px; }
.left { flex: 1; min-width: 0; display: flex; flex-direction: column; padding-left: 1px; }
.doctab { width: 388px; height: 35px; border: 2px solid #a3a3a3; border-bottom: 0; display: flex; align-items: center; justify-content: space-between; padding: 0 11px 2px 9px; white-space: nowrap; }
.doctab button { display: flex; }
.panel { flex: 1; display: flex; flex-direction: column; background: #fff; border: 2px solid #a3a3a3; }
.tb { display: flex; align-items: center; color: #222; }
.tb1 { height: 48px; }
.b { width: 36px; display: flex; align-items: center; justify-content: center; }
.tb .b:first-child { width: 34px; }
.red { color: #cf3126; } .grey { color: #a2a2a2; }
.sep { width: 1px; height: 39px; background: #909090; margin: 0 3px 0 2px; }
.sep.light { height: 30px; background: #ccc; }
.count, .txt { font-size: 19px; white-space: nowrap; }
.count { margin-left: 7px; width: 44px; }
.cols { margin-right: 2px; }
.ext { width: 56px; gap: 8px; }
.tb .txt { width: auto; justify-content: flex-start; }
.tb .anexos { width: 132px; gap: 8px; padding-left: 15px; }
.anexos .caret, .procs .caret, .filter .caret { margin-left: auto; }
.tb .procs { width: 142px; gap: 7px; margin: 0 3px 0 16px; }
.tb .filter { width: 193px; gap: 9px; padding-left: 14px; }
.tb2 { height: 38px; padding-bottom: 3px; color: #12759c; }
.lay { width: 69px; padding-left: 6px; }
.padrao { display: flex; align-items: center; gap: 6px; width: 84px; padding-left: 6px; }
.l { width: 39px; display: flex; align-items: center; justify-content: center; }
.chart { width: 50px; gap: 6px; }
.t { width: 39px; height: 37px; background: #cfdcf5; border: 1px solid #aabbd8; display: flex; align-items: center; justify-content: center; }
.abc { font: bold 12px/14px "DejaVu Sans", sans-serif; width: 40px; color: #2a8194; }
.groupby { height: 49px; background: #efefef; border-bottom: 2px solid #a3a3a3; display: flex; align-items: center; justify-content: space-between; padding: 0 4px 2px 7px; color: #1c7ba8; }
.groupby button { display: flex; }
.gridwrap { flex: 1; }
table { width: 100%; border-collapse: separate; border-spacing: 0; table-layout: fixed; }
.c0 { width: 34px; } .c1 { width: 62px; } .c2 { width: 114px; }
th { height: 34px; padding: 0 4px; font-weight: normal; text-align: left; color: #1c7ba8; border-right: 1px solid #c8c8c8; border-bottom: 2px solid #c8c8c8; }
td { height: 40px; padding: 0 10px; border-right: 1px solid #c8c8c8; border-bottom: 1px solid #e6e6e6; white-space: nowrap; }
tbody tr:nth-child(odd) td { background: #dcdcdc; }
tbody tr td.ind, tbody tr td.fill { background: #fff; border-bottom: 0; }
td.fill, th.fill { border-right: 0; }
th.ind { background: #efefef; border-right-color: #a3a3a3; border-bottom-color: #a3a3a3; }
td.ind { text-align: center; padding: 0; }
.chk { text-align: center; border-right: 2px solid #999; padding: 0; }
input[type=checkbox] { appearance: none; width: 21px; height: 21px; margin: 0; border: 1px solid #a5a5a5; background: #fff; vertical-align: middle; }
.foot { height: 56px; background: #efefef; border-top: 2px solid #c8c8c8; padding: 8px 0 0 36px; }
.foot output { display: flex; align-items: center; justify-content: flex-end; width: 57px; height: 36px; background: #fff; border: 1px solid #c8c8c8; padding-right: 8px; }
.bottom { height: 38px; display: flex; gap: 6px; padding: 5px 0 0 5px; }
.bottom button { display: flex; align-items: center; gap: 2px; padding: 3px 10px 0; background: #dcdcdc; border: 1px solid #c8c8c8; border-bottom: 0; }
.side { width: 38px; padding: 4px 0 0 5px; display: flex; flex-direction: column; gap: 6px; }
.side button { display: flex; flex-direction: column; align-items: center; height: 114px; padding-top: 10px; background: #dcdcdc; border: 1px solid #c8c8c8; border-right: 0; }
.side button + button { height: 195px; padding-top: 11px; gap: 4px; }
.side span { writing-mode: vertical-rl; white-space: nowrap; }

/* record dialog */
.dialog { position: absolute; left: 506px; top: 386px; width: 690px; height: 341px; background: #efefef; border: 4px solid #dadada; outline: 1px solid #c9c9c9; outline-offset: -4px; }
.dtitle { height: 36px; background: #dcdcdc; border-bottom: 2px solid #a8a8a8; display: flex; align-items: center; gap: 16px; padding: 0 10px 0 9px; }
.dtitle h1 { flex: 1; font-weight: bold; white-space: nowrap; }
.dtitle button { display: flex; }
.dtb { height: 50px; }
.tb .www { width: 53px; gap: 21px; margin-left: 17px; }
.dbody { margin: 5px 9px 0 8px; padding: 3px 2px 3px 3px; height: 186px; background: #fff; font-family: "Liberation Sans", Arial, sans-serif; }
.dtab { position: relative; display: block; width: 142px; height: 33px; margin-bottom: -1px; background: #fff; border: 1px solid #999; border-bottom: 0; border-radius: 6px 6px 0 0; z-index: 1; }
.form { border: 1px solid #999; height: 149px; padding: 17px 27px; display: flex; flex-direction: column; align-items: flex-start; }
.form label { font-weight: bold; font-size: 17px; line-height: 20px; }
.form input { height: 30px; margin: 1px 0 7px; border: 1px solid #e2e2e2; border-bottom: 2px solid #777; background: #fff; font: inherit; }
.short { width: 107px; }
.long { width: 575px; }
.dbtns { display: flex; justify-content: flex-end; gap: 11px; padding: 17px 23px 0 0; font-family: "Liberation Sans", Arial, sans-serif; }
.dbtns button { width: 110px; height: 32px; background: #f0f0f0; border: 1px solid #d0d0d0; border-radius: 6px; box-shadow: inset 0 0 0 2px #fff; }
.mark { position: absolute; border: 4px solid #f00; pointer-events: none; }
.m1 { left: 27px; top: 141px; width: 133px; height: 60px; }
.m2 { left: 26px; top: 197px; width: 626px; height: 71px; }
.m3 { left: 542px; top: 288px; width: 122px; height: 44px; }
.cursor { position: absolute; left: 1465px; top: 661px; }
```
